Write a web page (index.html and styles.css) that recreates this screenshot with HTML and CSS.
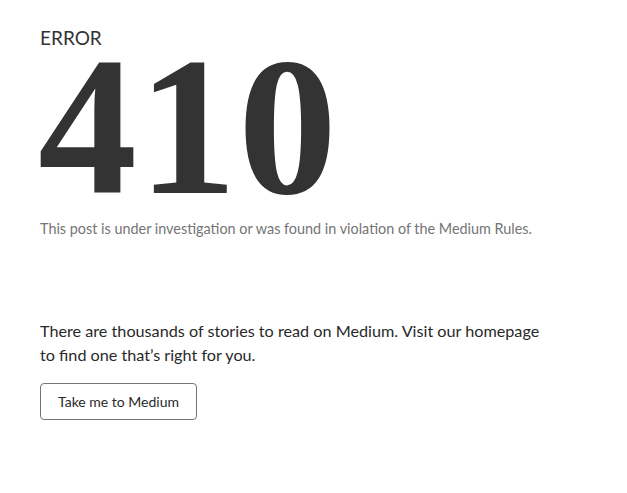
FILE: index.html
```html
<!DOCTYPE html>
<html lang="en">
<head>
<meta charset="UTF-8">
<meta name="viewport" content="width=device-width, initial-scale=1.0">
<title>Error 410</title>
<link rel="stylesheet" href="styles.css">
</head>
<body>
<div class="page">
    <div class="error-label">ERROR</div>
    <div class="error-code">410</div>
    <p class="error-note">This post is under investigation or was found in violation of the Medium Rules.</p>
    <p class="lead">There are thousands of stories to read on Medium. Visit our homepage to find one that’s right for you.</p>
    <button class="btn">Take me to Medium</button>
</div>
</body>
</html>
```

FILE: styles.css
```css
body {
    margin: 0;
    background: #fff;
    font-family: "Lato", "Noto Sans", sans-serif;
    color: #292929;
}
.page {
    padding: 26px 40px 0 40px;
    width: 510px;
}
.error-label {
    font-size: 19px;
    line-height: 24px;
    color: #333;
}
.error-code {
    font-family: "Liberation Serif", serif;
    font-weight: bold;
    font-size: 198px;
    line-height: 153px;
    letter-spacing: 1px;
    color: #333;
    margin-left: -2px;
}
.error-note {
    margin: 16px 0 0 0;
    font-size: 14.4px;
    line-height: 20px;
    color: #757575;
}
.lead {
    margin: 80px 0 0 0;
    font-size: 16.2px;
    line-height: 24px;
}
.btn {
    margin-top: 16px;
    font-family: inherit;
    font-size: 14px;
    color: #292929;
    background: #fff;
    border: 1px solid #757575;
    border-radius: 4px;
    padding: 0 17px;
    height: 37px;
}
```
